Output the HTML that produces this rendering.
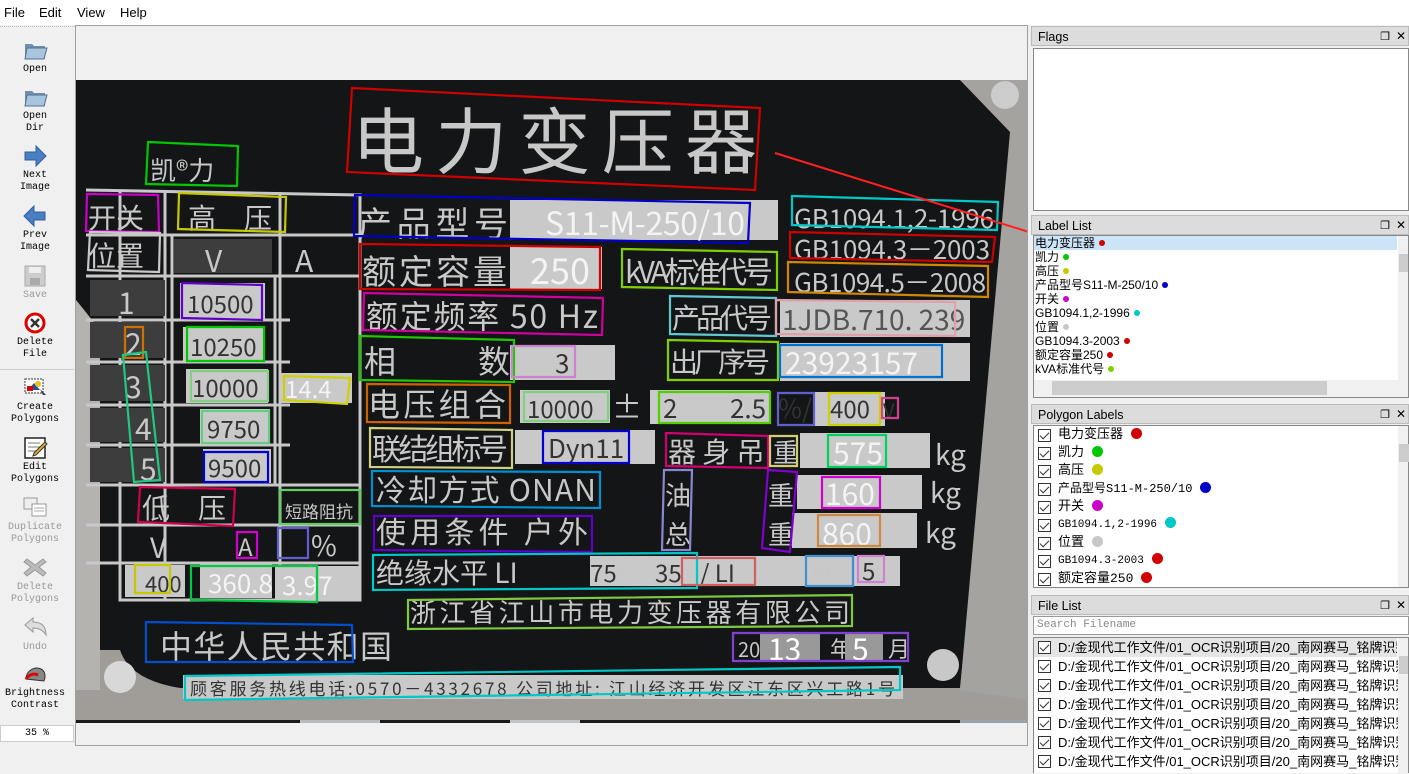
<!DOCTYPE html>
<html><head><meta charset="utf-8"><style>
*{margin:0;padding:0;box-sizing:border-box}
body{width:1409px;height:773px;overflow:hidden;background:#f0f0f0;font-family:"Liberation Sans","Noto Sans CJK SC",sans-serif;font-size:12px;color:#000;position:relative}
.menu{position:absolute;top:0;left:0;width:1409px;height:25px;background:#fff}
.menu span{position:absolute;top:5px;font-size:13px}
.tb{position:absolute;left:0;top:26px;width:75px;height:747px;background:#f0f0f0;border-top:1px dotted #bbb}
.btn{position:absolute;left:0;width:70px;text-align:center;font-family:"Liberation Mono",monospace;font-size:10px;line-height:12px}
.btn svg{display:block;margin:0 auto 2px}
.dis{color:#999}
.canvas{position:absolute;left:75px;top:25px;width:953px;height:721px;border:1px solid #a0a0a0;background:#f0f0f0;overflow:hidden}
.dock{position:absolute;left:1031px;width:378px}
.title{position:absolute;left:0;width:378px;height:20px;background:#dcdcdc;border:1px solid #bbb;font-size:12.5px;padding:3px 0 0 6px}
.title i{position:absolute;right:18px;top:3px;font-style:normal;font-size:11px}
.title b{position:absolute;right:2px;top:2px;font-weight:normal;font-size:12px}
.box{position:absolute;left:2px;width:376px;background:#fff;border:1px solid #888}
.ll div{height:14px;line-height:14px;font-size:12px;padding-left:1px;white-space:nowrap}
.dot{display:inline-block;width:6px;height:6px;border-radius:50%;margin-left:4px;vertical-align:1px}
.pl div{height:18px;line-height:18px;font-size:13px;white-space:nowrap;position:relative;padding-left:24px}
.cb{position:absolute;left:4px;top:3px;width:13px;height:13px;border:1px solid #333;background:#fff}
.cb:after{content:"";position:absolute;left:3px;top:0px;width:4px;height:8px;border:solid #333;border-width:0 1.5px 1.5px 0;transform:rotate(45deg)}
.pdot{display:inline-block;width:11px;height:11px;border-radius:50%;margin-left:8px;vertical-align:-1px}
.fl div{height:19px;line-height:19px;font-size:13px;white-space:nowrap;position:relative;padding-left:24px;overflow:hidden}
.vs{position:absolute;right:0;width:10px;background:#f0f0f0}
</style></head><body>
<div class="menu"><span style="left:4px">File</span><span style="left:39px">Edit</span><span style="left:77px">View</span><span style="left:120px">Help</span></div>

<div class="tb">
<div class="btn" style="top:11px"><svg width="26" height="24"><path d="M3 6h7l2 2h11v13H3z" fill="#6f8fae"/><path d="M5 10h20l-3 11H3z" fill="#a9c4de" stroke="#56708c"/></svg>Open</div>
<div class="btn" style="top:58px"><svg width="26" height="24"><path d="M3 6h7l2 2h11v13H3z" fill="#6f8fae"/><path d="M5 10h20l-3 11H3z" fill="#a9c4de" stroke="#56708c"/></svg>Open<br>Dir</div>
<div class="btn" style="top:117px"><svg width="26" height="24"><path d="M3 8h11V2l10 10-10 10v-6H3z" fill="#4a7fc4" stroke="#2f5f9e"/></svg>Next<br>Image</div>
<div class="btn" style="top:177px"><svg width="26" height="24"><path d="M23 8H12V2L2 12l10 10v-6h11z" fill="#4a7fc4" stroke="#2f5f9e"/></svg>Prev<br>Image</div>
<div class="btn dis" style="top:237px"><svg width="26" height="24"><rect x="3" y="2" width="20" height="20" fill="#ccc" stroke="#aaa"/><rect x="7" y="3" width="12" height="6" fill="#eee"/><rect x="8" y="14" width="10" height="7" fill="#aaa"/></svg>Save</div>
<div class="btn" style="top:284px"><svg width="26" height="24"><circle cx="13" cy="12" r="9" fill="#fff" stroke="#d00" stroke-width="3"/><path d="M9 8l8 8M17 8l-8 8" stroke="#333" stroke-width="2.5"/></svg>Delete<br>File</div>
<div style="position:absolute;top:342px;left:0;width:74px;border-top:1px solid #ccc"></div>
<div class="btn" style="top:349px"><svg width="26" height="24"><rect x="3" y="3" width="18" height="14" fill="#fff" stroke="#333" stroke-dasharray="2 1"/><path d="M6 14l6-7 6 7z" fill="#2250a0"/><rect x="5" y="10" width="6" height="5" fill="#d00"/><circle cx="16" cy="8" r="3" fill="#e8c020"/><path d="M18 13l6 6-3 0z" fill="#333"/></svg>Create<br>Polygons</div>
<div class="btn" style="top:409px"><svg width="26" height="24"><rect x="3" y="2" width="20" height="20" fill="#fff" stroke="#222" stroke-width="1.5"/><path d="M6 7h12M6 11h12M6 15h10" stroke="#777"/><path d="M12 17l11-11 2 2-11 11-3 1z" fill="#e8b020" stroke="#333"/></svg>Edit<br>Polygons</div>
<div class="btn dis" style="top:469px"><svg width="26" height="24"><rect x="2" y="2" width="13" height="11" fill="#eee" stroke="#999"/><rect x="10" y="8" width="14" height="12" fill="#fff" stroke="#999"/><path d="M12 12h10M12 15h10" stroke="#aaa"/></svg>Duplicate<br>Polygons</div>
<div class="btn dis" style="top:529px"><svg width="26" height="24"><path d="M5 3l8 6 8-6 3 3-7 5 7 6-3 3-8-6-8 6-3-3 7-6-7-5z" fill="#bbb" stroke="#999"/></svg>Delete<br>Polygons</div>
<div class="btn dis" style="top:589px"><svg width="26" height="24"><path d="M3 9l8-7v4c8 0 13 4 13 13-3-5-7-7-13-7v4z" fill="#ddd" stroke="#999"/></svg>Undo</div>
<div class="btn" style="top:635px"><svg width="26" height="24"><path d="M4 17c0-8 8-13 15-10 4 2 5 7 3 12z" fill="#888" stroke="#333"/><path d="M4 17c2-4 8-6 12-4" fill="none" stroke="#d00" stroke-width="3"/></svg>Brightness<br>Contrast</div>
<div style="position:absolute;top:698px;left:0;width:74px;height:17px;background:#fff;border:1px solid #ccc;font-family:'Liberation Mono',monospace;font-size:10px;text-align:center;line-height:15px">35 %</div>
</div>

<div class="canvas">
<svg width="953" height="721" style="position:absolute;left:0;top:0">
<g transform="translate(-76,-26)" font-family="Liberation Sans,Noto Sans CJK SC,sans-serif">
<rect x="76" y="80" width="952" height="643" fill="#8d8a86"/>
<rect x="76" y="695" width="952" height="28" fill="#1a1a1a"/>
<rect x="300" y="700" width="80" height="23" fill="#b8bcc2"/><rect x="510" y="700" width="70" height="23" fill="#c0c4ca"/><rect x="960" y="690" width="68" height="33" fill="#9aa2aa"/>
<path d="M76 80H1000L1028 80V720H76Z" fill="#a09d98"/>
<path d="M76 80H975Q990 100 1016 132L960 688H180Q130 680 120 650H100V330L76 300Z" fill="#141516"/>
<path d="M76 300L100 330V690H76Z" fill="#b4b3b0"/>
<path d="M960 80L1028 80L1028 700L960 690L1010 132Z" fill="#a5a3a0"/>
<circle cx="120" cy="677" r="16" fill="#d8d8d8"/><circle cx="943" cy="665" r="16" fill="#c8c8c8"/><circle cx="1005" cy="95" r="14" fill="#ccc"/>
<g stroke="#c8c8c8" stroke-width="3" fill="none">
<path d="M86 190L360 195V600H120V190"/>
<path d="M86 235H360M86 276H360M86 320H290M86 362H290M86 405H290M86 445H290M86 485H360M86 525H360M86 563H360"/>
<path d="M165 192V600M280 192V600M172 235V485M275 276V485"/>
</g>
<g fill="#3d3d3d"><rect x="90" y="280" width="75" height="36"/><rect x="90" y="322" width="75" height="36"/><rect x="90" y="365" width="75" height="36"/><rect x="90" y="408" width="75" height="34"/><rect x="90" y="448" width="75" height="34"/><rect x="174" y="239" width="98" height="34"/></g>
<g fill="#c9c9c9"><rect x="180" y="283" width="85" height="36"/><rect x="183" y="327" width="82" height="36"/><rect x="186" y="369" width="82" height="34"/><rect x="200" y="409" width="70" height="35"/><rect x="203" y="449" width="68" height="34"/><rect x="280" y="373" width="72" height="30"/><rect x="125" y="565" width="60" height="32"/><rect x="200" y="564" width="72" height="34"/><rect x="275" y="566" width="84" height="34"/>
<rect x="510" y="200" width="268" height="40"/><rect x="510" y="247" width="92" height="42"/><rect x="510" y="345" width="105" height="35"/><rect x="520" y="390" width="90" height="33"/><rect x="650" y="390" width="120" height="34"/><rect x="815" y="392" width="70" height="34"/><rect x="515" y="430" width="140" height="34"/><rect x="780" y="300" width="190" height="37"/><rect x="780" y="343" width="190" height="38"/><rect x="800" y="433" width="130" height="35"/><rect x="797" y="475" width="125" height="34"/><rect x="792" y="513" width="125" height="35"/><rect x="590" y="556" width="310" height="30"/><rect x="183" y="675" width="720" height="24"/></g>
<g fill="#c8c8c8" font-family="Noto Sans CJK SC,sans-serif">
<text x="352" y="168" font-size="72" textLength="405">电力变压器</text>
<text x="150" y="180" font-size="26">凯®力</text>
<text x="88" y="228" font-size="28">开关</text><text x="188" y="228" font-size="28">高　压</text>
<text x="88" y="266" font-size="28">位置</text><text x="205" y="272" font-size="30">V</text><text x="295" y="272" font-size="30">A</text>
<text x="118" y="314" font-size="30">1</text><text x="125" y="355" font-size="30">2</text><text x="125" y="398" font-size="30">3</text><text x="135" y="440" font-size="30">4</text><text x="140" y="480" font-size="30">5</text>
<text x="142" y="518" font-size="28">低　压</text><text x="285" y="518" font-size="17">短路阻抗</text><text x="150" y="558" font-size="28">V</text><text x="238" y="556" font-size="24">A</text><text x="311" y="556" font-size="28">%</text>
<text x="358" y="236" font-size="34" textLength="150">产品型号</text><text x="362" y="284" font-size="34" textLength="145">额定容量</text><text x="366" y="328" font-size="32" textLength="232">额定频率 50 Hz</text>
<text x="364" y="373" font-size="32">相</text><text x="478" y="373" font-size="32">数</text><text x="368" y="416" font-size="32" textLength="138">电压组合</text><text x="612" y="418" font-size="30">±</text><text x="690" y="418" font-size="28">x</text>
<text x="372" y="460" font-size="30" textLength="136">联结组标号</text><text x="376" y="501" font-size="30" textLength="220">冷却方式 ONAN</text><text x="376" y="543" font-size="30" textLength="212">使用条件 户外</text><text x="376" y="583" font-size="28">绝缘水平 LI</text><text x="612" y="583" font-size="26">AC</text><text x="810" y="582" font-size="26">AC</text>
<text x="625" y="283" font-size="30" textLength="148">kVA标准代号</text><text x="672" y="328" font-size="28" textLength="100">产品代号</text><text x="670" y="372" font-size="28" textLength="100">出厂序号</text>
<text x="668" y="462" font-size="28">器 身 吊</text><text x="773" y="462" font-size="26">重</text><text x="665" y="505" font-size="26">油</text><text x="665" y="544" font-size="26">总</text><text x="768" y="505" font-size="26">重</text><text x="768" y="544" font-size="26">重</text>
<text x="935" y="465" font-size="28">kg</text><text x="930" y="503" font-size="28">kg</text><text x="925" y="543" font-size="28">kg</text>
<text x="794" y="228" font-size="26" textLength="200">GB1094.1,2-1996</text><text x="794" y="259" font-size="26" textLength="196">GB1094.3－2003</text><text x="794" y="292" font-size="26" textLength="192">GB1094.5－2008</text>
<text x="410" y="622" font-size="26" textLength="440">浙江省江山市电力变压器有限公司</text><text x="160" y="658" font-size="32" textLength="232">中华人民共和国</text>
<text x="738" y="657" font-size="20">20</text><text x="830" y="657" font-size="22">年</text><text x="888" y="657" font-size="22">月</text>
<rect x="760" y="634" width="60" height="28" fill="#999"/><rect x="845" y="634" width="38" height="28" fill="#999"/>
<text x="768" y="660" font-size="30" fill="#fff">13</text><text x="852" y="660" font-size="30" fill="#fff">5</text>
</g>
<g fill="#333" font-family="Noto Sans CJK SC,sans-serif">
<text x="187" y="313" font-size="24">10500</text><text x="190" y="356" font-size="24">10250</text><text x="192" y="397" font-size="24">10000</text><text x="207" y="438" font-size="24">9750</text><text x="208" y="477" font-size="24">9500</text><text x="145" y="592" font-size="22">400</text>
<text x="527" y="418" font-size="24">10000</text><text x="663" y="418" font-size="26">2</text><text x="730" y="418" font-size="26">2.5</text><text x="778" y="418" font-size="26">%/</text><text x="830" y="418" font-size="24">400</text><text x="883" y="418" font-size="20">V</text>
<text x="548" y="458" font-size="26">Dyn11</text><text x="555" y="373" font-size="26">3</text><text x="590" y="582" font-size="24">75</text><text x="655" y="582" font-size="24">35</text><text x="700" y="582" font-size="24">/ LI</text><text x="862" y="580" font-size="24">5</text>
<text x="190" y="695" font-size="17" textLength="705">顾客服务热线电话:0570－4332678  公司地址: 江山经济开发区江东区兴工路1号</text>
</g>
<g fill="#f4f4f4" font-family="Noto Sans CJK SC,sans-serif">
<text x="545" y="235" font-size="32" textLength="200">S11-M-250/10</text><text x="530" y="284" font-size="36">250</text><text x="285" y="398" font-size="24">14.4</text>
<text x="782" y="330" font-size="28" fill="#555">1JDB.710. 239</text><text x="785" y="374" font-size="30">23923157</text>
<text x="833" y="464" font-size="30">575</text><text x="825" y="505" font-size="30">160</text><text x="822" y="545" font-size="30">860</text>
<text x="208" y="593" font-size="26">360.8</text><text x="282" y="595" font-size="26">3.97</text>
</g>
<g fill="none" stroke-width="2.2">
<polygon stroke="#d00000" points="352,88 760,108 755,190 347,172"/>
<polygon stroke="#00c800" points="148,142 238,146 237,186 146,184"/>
<polygon stroke="#c800c8" points="87,194 158,195 159,232 86,231"/>
<polygon stroke="#c8c800" points="179,193 286,197 285,232 178,229"/>
<polygon stroke="#c8c8c8" points="90,232 160,233 159,272 88,270"/>
<polygon stroke="#0000c8" points="355,195 750,203 748,243 354,236"/>
<polygon stroke="#00c8c8" points="792,196 998,202 997,230 792,225"/>
<polygon stroke="#d00000" points="360,244 600,247 600,290 360,289"/>
<polygon stroke="#80d000" points="622,249 777,252 777,290 622,287"/>
<polygon stroke="#d00000" points="790,232 995,237 992,262 790,258"/>
<polygon stroke="#d08800" points="788,262 988,266 988,297 788,292"/>
<polygon stroke="#d000a0" points="364,293 603,298 602,335 363,330"/>
<polygon stroke="#6000c8" points="182,283 262,285 262,320 182,318"/>
<polygon stroke="#60c8d0" points="670,296 776,298 776,336 670,334"/>
<polygon stroke="#e0a0a8" points="776,300 955,302 955,336 776,334"/>
<polygon stroke="#00c800" points="187,327 264,327 264,361 187,361"/>
<polygon stroke="#d07000" points="125,327 143,327 143,358 125,358"/>
<polygon stroke="#20c880" points="123,355 146,352 160,480 134,482"/>
<polygon stroke="#20c800" points="360,336 514,340 514,382 360,380"/>
<polygon stroke="#d080d0" points="512,346 575,346 575,377 512,377"/>
<polygon stroke="#80d000" points="668,340 778,342 778,380 668,380"/>
<polygon stroke="#0070d0" points="780,345 942,345 942,377 780,377"/>
<polygon stroke="#80d080" points="191,371 268,371 268,401 191,401"/>
<polygon stroke="#d0d000" points="284,376 350,378 347,404 284,400"/>
<polygon stroke="#d06000" points="367,384 510,385 510,423 367,422"/>
<polygon stroke="#80d080" points="524,392 608,392 608,421 524,421"/>
<polygon stroke="#50d000" points="659,392 770,392 770,423 659,423"/>
<polygon stroke="#6060d0" points="778,393 814,393 814,425 778,425"/>
<polygon stroke="#d0d000" points="829,393 880,393 880,425 829,425"/>
<polygon stroke="#d04090" points="882,398 898,398 898,418 882,418"/>
<polygon stroke="#60d080" points="202,411 269,411 269,443 202,443"/>
<polygon stroke="#0000d0" points="204,452 268,452 268,482 204,482"/>
<polygon stroke="#d0d080" points="370,428 512,430 512,468 370,467"/>
<polygon stroke="#0000d0" points="543,431 629,431 629,463 543,463"/>
<polygon stroke="#d00070" points="666,433 768,436 768,468 666,466"/>
<polygon stroke="#d0d070" points="770,436 797,436 797,466 770,466"/>
<polygon stroke="#00d060" points="828,435 886,435 886,467 828,467"/>
<polygon stroke="#0090d0" points="372,471 600,472 600,508 372,506"/>
<polygon stroke="#8888d0" points="664,470 692,470 690,550 662,550"/>
<polygon stroke="#8000d0" points="768,470 797,472 790,552 762,548"/>
<polygon stroke="#d000d0" points="822,477 880,477 880,508 822,508"/>
<polygon stroke="#d00050" points="140,487 235,489 233,526 138,522"/>
<polygon stroke="#60d060" points="280,490 360,490 360,524 280,524"/>
<polygon stroke="#6000d0" points="374,516 592,516 592,552 374,550"/>
<polygon stroke="#d08840" points="818,515 880,515 880,546 818,546"/>
<polygon stroke="#d000d0" points="237,532 257,532 257,558 237,558"/>
<polygon stroke="#6060d0" points="278,528 308,528 308,558 278,558"/>
<polygon stroke="#00c8c8" points="373,555 697,553 697,588 373,590"/>
<polygon stroke="#d06060" points="682,558 755,558 755,585 682,585"/>
<polygon stroke="#4090d0" points="806,556 853,556 853,586 806,586"/>
<polygon stroke="#d080d0" points="858,556 884,556 884,582 858,582"/>
<polygon stroke="#c8c800" points="135,565 170,565 170,593 135,593"/>
<polygon stroke="#00c840" points="191,566 317,566 317,602 191,600"/>
<polygon stroke="#80c840" points="408,600 852,595 852,626 408,629"/>
<polygon stroke="#0050d0" points="146,622 352,625 353,662 146,662"/>
<polygon stroke="#8040d0" points="733,633 908,633 908,661 733,661"/>
<polygon stroke="#00c8c8" points="185,676 900,667 900,690 185,700"/>
</g>
<path d="M775 153L1045 237" stroke="#ff2020" stroke-width="2"/>
<path d="M1030 225L1046 238L1028 240" fill="#ff2020"/>
</g>
</svg>
</div>

<div class="dock" style="top:26px">
<div class="title" style="top:0">Flags<i>&#x2750;</i><b>✕</b></div>
<div class="box" style="top:22px;height:163px;left:2px"></div>
</div>
<div class="dock" style="top:215px">
<div class="title" style="top:0">Label List<i>&#x2750;</i><b>✕</b></div>
<div class="box ll" style="top:20px;height:163px">
<div style="background:#cce4f7;margin-right:11px">电力变压器<span class="dot" style="background:#d00000"></span></div>
<div>凯力<span class="dot" style="background:#00c800"></span></div>
<div>高压<span class="dot" style="background:#c8c800"></span></div>
<div>产品型号S11-M-250/10<span class="dot" style="background:#0000c8"></span></div>
<div>开关<span class="dot" style="background:#c800c8"></span></div>
<div>GB1094.1,2-1996<span class="dot" style="background:#00c8c8"></span></div>
<div>位置<span class="dot" style="background:#c8c8c8"></span></div>
<div>GB1094.3-2003<span class="dot" style="background:#d00000"></span></div>
<div>额定容量250<span class="dot" style="background:#d00000"></span></div>
<div>kVA标准代号<span class="dot" style="background:#80d000"></span></div>
<div class="vs" style="top:0;height:144px"><div style="position:absolute;top:18px;left:1px;width:9px;height:18px;background:#ccc"></div></div>
<div style="position:absolute;left:0;top:144px;width:374px;height:17px;background:#f0f0f0;padding:0"><div style="position:absolute;left:18px;top:1px;width:275px;height:14px;background:#ccc"></div></div>
</div>
</div>
<div class="dock" style="top:404px">
<div class="title" style="top:0">Polygon Labels<i>&#x2750;</i><b>✕</b></div>
<div class="box pl" style="top:21px;height:163px;font-family:'Liberation Mono','Noto Sans CJK SC',monospace">
<div><span class="cb"></span>电力变压器<span class="pdot" style="background:#d00000"></span></div>
<div><span class="cb"></span>凯力<span class="pdot" style="background:#00c800"></span></div>
<div><span class="cb"></span>高压<span class="pdot" style="background:#c8c800"></span></div>
<div style="font-size:12px"><span class="cb"></span>产品型号S11-M-250/10<span class="pdot" style="background:#0000c8"></span></div>
<div><span class="cb"></span>开关<span class="pdot" style="background:#c800c8"></span></div>
<div style="font-size:11px"><span class="cb"></span>GB1094.1,2-1996<span class="pdot" style="background:#00c8c8"></span></div>
<div><span class="cb"></span>位置<span class="pdot" style="background:#c8c8c8"></span></div>
<div style="font-size:11px"><span class="cb"></span>GB1094.3-2003<span class="pdot" style="background:#d00000"></span></div>
<div><span class="cb"></span>额定容量250<span class="pdot" style="background:#d00000"></span></div>
<div class="vs" style="position:absolute;top:0;height:161px;padding:0"><div style="position:absolute;top:18px;left:1px;width:9px;height:18px;background:#ccc"></div></div>
</div>
</div>
<div class="dock" style="top:595px">
<div class="title" style="top:0">File List<i>&#x2750;</i><b>✕</b></div>
<div style="position:absolute;left:2px;top:21px;width:376px;height:19px;background:#fff;border:1px solid #999;font-family:'Liberation Mono',monospace;font-size:11px;color:#888;padding:2px 3px">Search Filename</div>
<div class="box fl" style="top:42px;height:136px;border-bottom:none">
<div style="background:#e5e5e5;margin-right:11px"><span class="cb"></span>D:/金现代工作文件/01_OCR识别项目/20_南网赛马_铭牌识别/铭牌</div>
<div><span class="cb"></span>D:/金现代工作文件/01_OCR识别项目/20_南网赛马_铭牌识别/铭牌</div>
<div><span class="cb"></span>D:/金现代工作文件/01_OCR识别项目/20_南网赛马_铭牌识别/铭牌</div>
<div><span class="cb"></span>D:/金现代工作文件/01_OCR识别项目/20_南网赛马_铭牌识别/铭牌</div>
<div><span class="cb"></span>D:/金现代工作文件/01_OCR识别项目/20_南网赛马_铭牌识别/铭牌</div>
<div><span class="cb"></span>D:/金现代工作文件/01_OCR识别项目/20_南网赛马_铭牌识别/铭牌</div>
<div><span class="cb"></span>D:/金现代工作文件/01_OCR识别项目/20_南网赛马_铭牌识别/铭牌</div>
<div class="vs" style="position:absolute;top:0;height:136px;padding:0"><div style="position:absolute;top:18px;left:1px;width:9px;height:18px;background:#ccc"></div></div>
</div>
</div>
</body></html>
